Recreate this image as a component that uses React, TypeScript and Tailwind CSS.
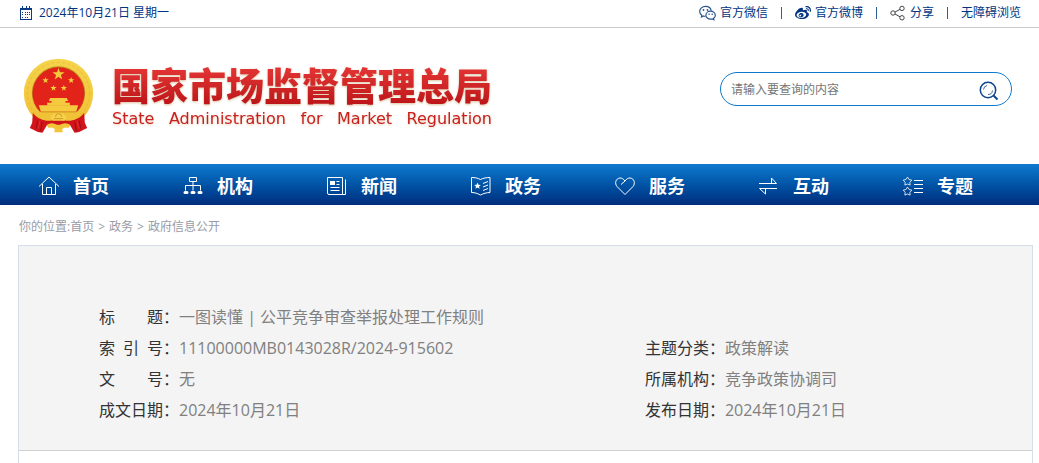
import type { ReactNode } from "react";
import { FaWeibo } from "react-icons/fa";

const starPoints = (cx: number, cy: number, r: number, inner = 0.4) =>
  Array.from({ length: 10 }, (_, i) => {
    const radius = i % 2 ? r * inner : r;
    const a = (Math.PI * i) / 5 - Math.PI / 2;
    return `${(cx + radius * Math.cos(a)).toFixed(1)},${(cy + radius * Math.sin(a)).toFixed(1)}`;
  }).join(" ");

function Emblem() {
  return (
    <svg viewBox="40 24 212 225" className="h-[75px] w-[71px] shrink-0" role="img" aria-label="国徽">
      <defs>
        <linearGradient id="gold" x1="0" y1="0" x2="0" y2="1">
          <stop offset="0" stopColor="#f5d44c" />
          <stop offset="1" stopColor="#f0bf33" />
        </linearGradient>
      </defs>
      <circle cx="146" cy="130" r="104" fill="url(#gold)" />
      <circle cx="146" cy="130" r="93" fill="none" stroke="#dda526" strokeWidth="4" strokeDasharray="9 7" opacity="0.3" />
      <circle cx="146" cy="129" r="80" fill="#c08f20" />
      <circle cx="146" cy="130" r="78" fill="#e2231a" />
      <g fill="#f4cb3e">
        <polygon points={starPoints(146, 73, 19)} />
        <polygon points={starPoints(107, 91, 10)} />
        <polygon points={starPoints(184, 91, 10)} />
        <polygon points={starPoints(131, 114, 10)} />
        <polygon points={starPoints(162, 114, 10)} />
        <path d="M121 144h50l4 9h-58z" />
        <path d="M125 152h42v8h-42z" />
        <path d="M112 158h68v9h-68z" />
        <path d="M87 166h118l-6 19H93z" />
      </g>
      <path d="M84 185h124c-10 20-34 32-62 32s-52-12-62-32z" fill="#f0c238" />
      <path d="M93 186h106" stroke="#c98a1c" strokeWidth="2" />
      <path d="M69 188c8 12 22 21 42 24 10 2 18-3 35-3s25 5 35 3c20-3 34-12 42-24l2 30 7 16-24 12-14 2-14-24h-68l-14 24-14-2-24-12 7-16z" fill="#d1141a" />
      <path d="M122 202c4-8 12-14 24-14s20 6 24 14l-6 10h-36z" fill="#f6d04a" />
      <path d="M137 200a9 9 0 0 1 18 0M132 206h28" fill="none" stroke="#cf9526" strokeWidth="3" />
      <path d="M110 226c10-8 22-9 36 2 14-11 26-10 36-2l-7 8c-8-3-12-2-18 4l2 9h-26l2-9c-6-6-10-7-18-4z" fill="#f2c43a" />
      <path d="M84 212l-5 24M97 216l-5 28M208 212l5 24M195 216l5 28" stroke="#9c0c13" strokeWidth="3" />
      <path d="M90 212l-5 24M202 212l5 24" stroke="#ee3a34" strokeWidth="2" />
    </svg>
  );
}

function CalendarIcon() {
  return (
    <svg viewBox="0 0 14 14" className="h-3.5 w-3.5" fill="none" stroke="#0a3a86" shapeRendering="crispEdges">
      <path d="M1 2.5h12M1.5 2v11M12.5 2v11M1 13.5h12M1 3.5h12" />
      <path d="M3.5 0v3M7.5 0v3M10.5 0v3" />
      <path d="M3 6.5h1M6 6.5h1M8 6.5h1M10 6.5h1M3 8.5h1M6 8.5h1M8 8.5h1M10 8.5h1M3 11h1M6 11h1M8 11h1" />
    </svg>
  );
}

function WechatIcon() {
  return (
    <svg viewBox="0 0 17 16" className="h-4 w-[17px]" fill="none" stroke="#2a548f" strokeWidth="1.2">
      <path d="M6.500 11.300c-.7 0-1.300-.1-1.900-.3L2.500 12l.3-1.800C1.500 9.300.7 8 .7 6.400c0-2.800 2.600-5 5.800-5 3 0 5.400 1.900 5.700 4.400" />
      <path d="M11.600 6.200c-2.600 0-4.700 1.800-4.700 4s2.100 4 4.700 4c.6 0 1.100-.1 1.600-.2l1.700.8-.3-1.500c1-.7 1.700-1.800 1.700-3.100 0-2.200-2.100-4-4.700-4z" />
      <g fill="#2a548f" stroke="none">
        <circle cx="4.500" cy="5" r="0.9" />
        <circle cx="8.500" cy="5" r="0.9" />
        <circle cx="10.100" cy="9.300" r="0.8" />
        <circle cx="13.200" cy="9.300" r="0.8" />
      </g>
    </svg>
  );
}

function ShareIcon() {
  return (
    <svg viewBox="0 0 16 16" className="h-4 w-4" fill="none" stroke="#444">
      <circle cx="3" cy="8" r="2.2" />
      <circle cx="12" cy="3.4" r="2.2" />
      <circle cx="12" cy="12.8" r="2.2" />
      <path d="M5 7l5-2.6M5 9l5 2.8" />
    </svg>
  );
}

function NavIcon({ children }: { children: ReactNode }) {
  return (
    <svg viewBox="0 0 20 20" className="h-5 w-5 overflow-visible" fill="none" stroke="#fff">
      {children}
    </svg>
  );
}

const navItems: { label: string; icon: ReactNode }[] = [
  {
    label: "首页",
    icon: <path d="M0 10.5 10 1l10 9.5M3.5 8v10.5h13V8M7.5 18.5v-7h5v7" />,
  },
  {
    label: "机构",
    icon: (
      <>
        <path d="M6.500 1.500h7v4h-7zM10 5.500v9M2.500 14.500v-5h15v5" />
        <path d="M2 16.500h2M9 16.500h2M16 16.500h2" strokeWidth="3" strokeLinecap="round" />
      </>
    ),
  },
  {
    label: "新闻",
    icon: (
      <>
        <path d="M.5 1.500h15v17H2q-1.500 0-1.500-1.500zM15.500 18.500h3v-15M9.500 5.500h3M9.500 8.500h3M3.500 11.500h9M3.500 14.500h9" />
        <path d="M3 5h5v4H3z" fill="#fff" stroke="none" />
      </>
    ),
  },
  {
    label: "政务",
    icon: (
      <>
        <path d="M.5 1.500c3.500 0 6 .5 9 2 3-1.500 6-2 9.500-2v15c-3.500 0-6.500 1-9.500 2.500-3-1.500-5.500-2.500-9-2.500zM12 7.500l5-2M12 11l5-2M12 14.500l5-2" />
        <polygon points={starPoints(6.5, 10, 3.5, 0.45)} fill="#fff" stroke="none" />
      </>
    ),
  },
  {
    label: "服务",
    icon: <path d="M10 18.500 2 10.500C-.5 7.500.5 2.500 5 2c2 0 3.500 1 5 3 1.500-2 3-3 5-3 4.500.5 5.500 5.500 3 8.500zM10 5 6 8.500" />,
  },
  {
    label: "互动",
    icon: <path d="M0 7.500h17.500L12.500 2v5.500M18 12.500H.5l6 5.500v-5.500" />,
  },
  {
    label: "专题",
    icon: (
      <>
        <polygon points={starPoints(4.5, 5.5, 4.5, 0.55)} strokeWidth="0.8" />
        <polygon points={starPoints(4.5, 15.5, 4.5, 0.55)} strokeWidth="0.8" />
        <path d="M11 4.500h9M11 8.500h9M11 12.500h9M11 16.500h9" />
      </>
    ),
  },
];

const infoRows = [
  [{ label: "标题", value: "一图读懂 | 公平竞争审查举报处理工作规则" }],
  [
    { label: "索引号", value: "11100000MB0143028R/2024-915602" },
    { label: "主题分类", value: "政策解读" },
  ],
  [
    { label: "文号", value: "无" },
    { label: "所属机构", value: "竞争政策协调司" },
  ],
  [
    { label: "成文日期", value: "2024年10月21日" },
    { label: "发布日期", value: "2024年10月21日" },
  ],
];

function Separator() {
  return <span className="h-3 w-px bg-[#2f6096]" />;
}

export default function App() {
  return (
    <div className="bg-white font-['Open_Sans','Noto_Sans_CJK_SC',sans-serif] text-xs text-[#333]">
      <div className="flex h-7 items-center justify-between border-b border-[#ccc] pr-[18px] pb-0.5 pl-[19px] text-[#003482]">
        <div className="flex items-center gap-1.5">
          <CalendarIcon />
          <span>2024年10月21日 星期一</span>
        </div>
        <div className="flex items-center gap-[13px] whitespace-nowrap">
          <a href="#" className="flex items-center gap-1">
            <WechatIcon />
            官方微信
          </a>
          <Separator />
          <a href="#" className="flex items-center gap-1">
            <FaWeibo className="h-4 w-4" />
            官方微博
          </a>
          <Separator />
          <a href="#" className="flex items-center gap-1">
            <ShareIcon />
            分享
          </a>
          <Separator />
          <a href="#">无障碍浏览</a>
        </div>
      </div>

      <header className="flex items-start justify-between pt-[30px] pr-[27px] pb-[31px] pl-[23px]">
        <a href="#" className="flex gap-[18px]">
          <Emblem />
          <div className="mt-[7px] whitespace-nowrap">
            <h1 className="bg-linear-to-b from-[#e63636] to-[#bd1419] bg-clip-text text-[38px] leading-10 font-black text-transparent drop-shadow-[0_1px_1px_#d9c0a0]">
              国家市场监督管理总局
            </h1>
            <p className="mt-0.5 font-['DejaVu_Sans',sans-serif] text-base leading-6 text-[#c9201f] [text-align-last:justify] drop-shadow-[0_1px_1px_#e3d0b8]">
              State Administration for Market Regulation
            </p>
          </div>
        </a>
        <form className="mt-3.5 flex h-[34px] w-[292px] items-center rounded-full border border-[#0f79cd] pr-3 pl-2.5">
          <input
            type="text"
            aria-label="搜索"
            placeholder="请输入要查询的内容"
            className="min-w-0 flex-1 pt-0.5 outline-none placeholder:text-[#757575]"
          />
          <button type="button" aria-label="查询" className="mt-1">
            <svg viewBox="0 0 20 20" className="h-5 w-5" fill="none" stroke="#0c4590">
              <circle cx="9" cy="9" r="7.7" strokeWidth="1.5" />
              <path d="M14.500 14.500l4 4" strokeWidth="2" />
              <path d="M4.500 8.500A4.500 4.500 0 0 1 8 4.500M13.500 9.500A4.500 4.500 0 0 1 9 13.500" strokeWidth="0.8" />
            </svg>
          </button>
        </form>
      </header>

      <nav className="flex h-[41px] bg-linear-to-b from-[#107bd0] to-[#002d7d] pl-[19px]">
        {navItems.map((item) => (
          <a
            key={item.label}
            href="#"
            className="flex w-36 items-center gap-3.5 pt-0.5 pl-5 text-lg font-bold text-white"
          >
            <NavIcon>{item.icon}</NavIcon>
            {item.label}
          </a>
        ))}
      </nav>

      <div className="flex h-10 items-center gap-1 pt-1 pl-[19px] text-[#999ca6]">
        <span>
          你的位置:<a href="#">首页</a>
        </span>
        <span>&gt;</span>
        <a href="#">政务</a>
        <span>&gt;</span>
        <a href="#">政府信息公开</a>
      </div>

      <main className="mr-1.5 ml-[18px] border border-b-0 border-[#d5dcea] pb-3">
        <dl className="border-b border-[#d2d2d2] bg-[#f4f4f4] px-20 pt-14 pb-6 text-base leading-[31px]">
          {infoRows.map((row) => (
            <div key={row[0].label} className={row.length > 1 ? "grid grid-cols-[64%_36%]" : ""}>
              {row.map((field) => (
                <div key={field.label} className="flex whitespace-nowrap">
                  <dt className="flex">
                    <span className="w-16 [text-align-last:justify]">{field.label}</span>：
                  </dt>
                  <dd className="text-[#808080]">{field.value}</dd>
                </div>
              ))}
            </div>
          ))}
        </dl>
      </main>
    </div>
  );
}
